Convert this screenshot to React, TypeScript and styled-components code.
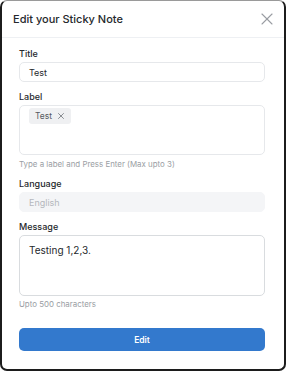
import styled, { createGlobalStyle } from "styled-components";
import { X } from "lucide-react";

const GlobalStyle = createGlobalStyle`
  * { box-sizing: border-box; }
  html, body {
    margin: 0;
    padding: 0;
    background: #ffffff;
    font-family: Inter, "Noto Sans", sans-serif;
    color: #1f2328;
  }
`;

const Card = styled.div`
  width: 286px;
  height: 371px;
  background: #fff;
  border: 2px solid #1c1c1c;
  border-top: 1px solid #9a9a9a;
  border-radius: 7px;
  display: flex;
  flex-direction: column;
  overflow: hidden;
`;

const Header = styled.div`
  height: 37px;
  display: flex;
  align-items: center;
  justify-content: space-between;
  padding: 0 7px 0 11px;
  border-bottom: 1px solid #eef0f3;
`;

const HeaderTitle = styled.h2`
  margin: 0;
  font-size: 11px;
  font-weight: 500;
  color: #25282c;
`;

const CloseButton = styled.button`
  border: none;
  background: none;
  padding: 0;
  display: flex;
  color: #9a9da3;
  cursor: pointer;
`;

const Body = styled.div`
  padding: 10px 19px 0 17px;
  display: flex;
  flex-direction: column;
`;

const Field = styled.div<{ $gap?: number }>`
  display: flex;
  flex-direction: column;
  margin-bottom: ${(p) => p.$gap ?? 9}px;
`;

const Label = styled.label`
  font-size: 9px;
  line-height: 11px;
  font-weight: 500;
  color: #25282c;
  margin-bottom: 3px;
`;

const Input = styled.div<{ $disabled?: boolean }>`
  height: 20px;
  border: 1px solid ${(p) => (p.$disabled ? "#f4f5f7" : "#e6e8eb")};
  background: ${(p) => (p.$disabled ? "#f4f5f7" : "#fff")};
  border-radius: 5px;
  padding: 0 9px;
  display: flex;
  align-items: center;
  font-size: 9px;
  color: ${(p) => (p.$disabled ? "#b4b8bd" : "#25282c")};
`;

const TagBox = styled.div`
  height: 50px;
  border: 1px solid #e6e8eb;
  border-radius: 5px;
  padding: 2px 9px;
  display: flex;
  align-items: flex-start;
`;

const Tag = styled.span`
  display: inline-flex;
  align-items: center;
  gap: 4px;
  background: #eff0f2;
  border-radius: 3px;
  padding: 0 5px 0 6px;
  height: 16px;
  font-size: 8.5px;
  color: #555a60;
`;

const Hint = styled.div<{ $top?: number }>`
  font-size: 7.9px;
  line-height: 10px;
  color: #9a9ea4;
  margin-top: ${(p) => p.$top ?? 4}px;
`;

const TextArea = styled.div`
  height: 61px;
  border: 1px solid #d9dcdf;
  border-radius: 5px;
  padding: 8px 9px;
  font-size: 10px;
  line-height: 13px;
  color: #25282c;
`;

const SubmitButton = styled.button`
  margin-top: 19px;
  height: 23px;
  width: 100%;
  border: none;
  border-radius: 5px;
  background: #3379cd;
  color: #fff;
  font-family: Inter, "Noto Sans", sans-serif;
  font-size: 8.5px;
  font-weight: 600;
`;

export default function App() {
  return (
    <>
      <GlobalStyle />
      <Card>
        <Header>
          <HeaderTitle>Edit your Sticky Note</HeaderTitle>
          <CloseButton>
            <X size={20} strokeWidth={1.3} />
          </CloseButton>
        </Header>
        <Body>
          <Field>
            <Label>Title</Label>
            <Input>Test</Input>
          </Field>
          <Field>
            <Label>Label</Label>
            <TagBox>
              <Tag>
                Test <X size={10} strokeWidth={1.6} />
              </Tag>
            </TagBox>
            <Hint>Type a label and Press Enter (Max upto 3)</Hint>
          </Field>
          <Field>
            <Label>Language</Label>
            <Input $disabled>English</Input>
          </Field>
          <Field $gap={0}>
            <Label>Message</Label>
            <TextArea>Testing 1,2,3.</TextArea>
            <Hint $top={3}>Upto 500 characters</Hint>
          </Field>
          <SubmitButton>Edit</SubmitButton>
        </Body>
      </Card>
    </>
  );
}
